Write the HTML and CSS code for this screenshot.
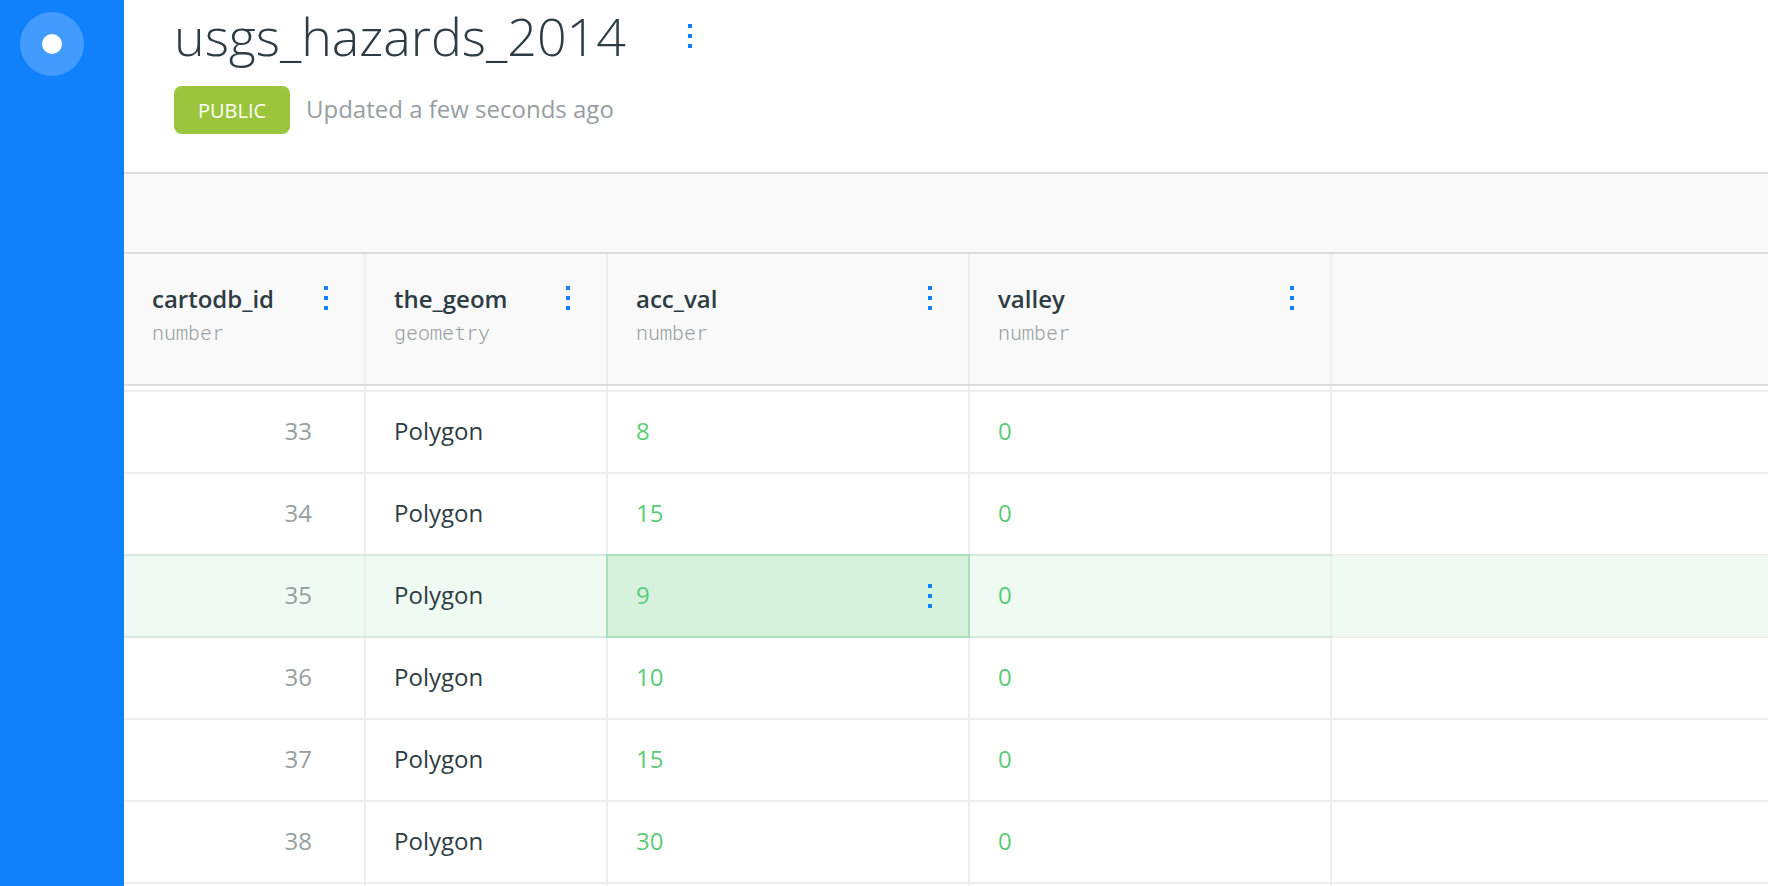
FILE: index.html
```html
<!DOCTYPE html>
<html lang="en">
<head>
<meta charset="utf-8">
<title>usgs_hazards_2014</title>
<link rel="stylesheet" href="styles.css">
</head>
<body>
<div class="app">
  <nav class="rail"><span class="logo"><span class="logo-dot"></span></span></nav>
  <main class="main">
    <header class="header">
      <div class="title-row">
        <h1 class="title">usgs_hazards_2014</h1>
        <svg class="dots" viewBox="0 0 4 24"><path d="M0 0h4v4H0zM0 10h4v4H0zM0 20h4v4H0z"/></svg>
      </div>
      <div class="meta">
        <span class="badge">PUBLIC</span>
        <span class="updated">Updated a few seconds ago</span>
      </div>
    </header>
    <div class="toolbar"></div>
    <div class="row head">
      <div class="th"><div><div class="name">cartodb_id</div><div class="type">number</div></div><svg class="dots" viewBox="0 0 4 24"><path d="M0 0h4v4H0zM0 10h4v4H0zM0 20h4v4H0z"/></svg></div>
      <div class="th"><div><div class="name">the_geom</div><div class="type">geometry</div></div><svg class="dots" viewBox="0 0 4 24"><path d="M0 0h4v4H0zM0 10h4v4H0zM0 20h4v4H0z"/></svg></div>
      <div class="th"><div><div class="name">acc_val</div><div class="type">number</div></div><svg class="dots" viewBox="0 0 4 24"><path d="M0 0h4v4H0zM0 10h4v4H0zM0 20h4v4H0z"/></svg></div>
      <div class="th"><div><div class="name">valley</div><div class="type">number</div></div><svg class="dots" viewBox="0 0 4 24"><path d="M0 0h4v4H0zM0 10h4v4H0zM0 20h4v4H0z"/></svg></div>
      <div class="th rest"></div>
    </div>
    <div class="row sliver"><div class="td"></div><div class="td"></div><div class="td"></div><div class="td"></div><div class="td rest"></div></div>
    <div class="row"><div class="td id">33</div><div class="td">Polygon</div><div class="td num">8</div><div class="td num">0</div><div class="td rest"></div></div>
    <div class="row above-active"><div class="td id">34</div><div class="td">Polygon</div><div class="td num">15</div><div class="td num">0</div><div class="td rest"></div></div>
    <div class="row active"><div class="td id">35</div><div class="td">Polygon</div><div class="td num selected">9<svg class="dots" viewBox="0 0 4 24"><path d="M0 0h4v4H0zM0 10h4v4H0zM0 20h4v4H0z"/></svg></div><div class="td num">0</div><div class="td rest"></div></div>
    <div class="row"><div class="td id">36</div><div class="td">Polygon</div><div class="td num">10</div><div class="td num">0</div><div class="td rest"></div></div>
    <div class="row"><div class="td id">37</div><div class="td">Polygon</div><div class="td num">15</div><div class="td num">0</div><div class="td rest"></div></div>
    <div class="row"><div class="td id">38</div><div class="td">Polygon</div><div class="td num">30</div><div class="td num">0</div><div class="td rest"></div></div>
    <div class="row"><div class="td"></div><div class="td"></div><div class="td"></div><div class="td"></div><div class="td rest"></div></div>
  </main>
</div>
</body>
</html>
```
FILE: styles.css
```css
* { box-sizing: border-box; }
body {
  margin: 0;
  background: #fff;
  color: #2e3c43;
  font: 24px/32px "Open Sans", sans-serif;
}
.app { display: flex; height: 886px; overflow: hidden; }
.rail {
  flex: none;
  width: 124px;
  padding: 12px 20px;
  background: #1181fb;
}
.logo {
  display: flex;
  align-items: center;
  justify-content: center;
  width: 64px;
  height: 64px;
  border-radius: 50%;
  background: #439bfd;
}
.logo-dot { width: 20px; height: 20px; border-radius: 50%; background: #fff; }
.main { flex: 1; min-width: 0; }
.dots { display: block; flex: none; width: 4px; height: 24px; fill: #1181fb; }

.header { height: 174px; padding-left: 50px; border-bottom: 2px solid #ddd; }
.title-row { display: flex; align-items: center; gap: 62px; height: 72px; }
.title { margin: 0; font-size: 52px; line-height: 72px; font-weight: 300; letter-spacing: -0.06px; }
.meta { display: flex; align-items: center; gap: 16px; margin-top: 14px; }
.badge {
  width: 116px;
  height: 48px;
  border-radius: 8px;
  background: #9bc63b;
  color: #fff;
  font-size: 20px;
  line-height: 49px;
  text-align: center;
}
.updated { padding-bottom: 2px; color: #979ea1; }
.toolbar { height: 80px; border-bottom: 2px solid #ddd; background: #f9f9f9; }

.row { display: grid; grid-template-columns: 242px 242px 362px 362px 1fr; height: 82px; }
.head { height: 132px; background: #f9f9f9; }
.th {
  display: flex;
  justify-content: space-between;
  padding: 29px 38px 0 28px;
  border-bottom: 2px solid #ddd;
  box-shadow: inset -2px 0 #eee;
}
.th .dots { margin-top: 3px; }
.name { font-weight: 600; line-height: 32px; }
.type {
  margin-top: 1px;
  color: #979ea1;
  font: 300 20px/32px "Roboto Mono", "DejaVu Sans Mono", monospace;
}
.td {
  display: flex;
  align-items: center;
  justify-content: space-between;
  padding: 0 38px 2px 28px;
  border-bottom: 2px solid #eee;
  box-shadow: inset -2px 0 #eee;
}
.td .dots { margin-top: 2px; }
.rest { box-shadow: none; }
.id { justify-content: flex-end; padding-right: 54px; color: #979ea1; }
.num { color: #5bcb79; }
.sliver { height: 6px; }
.active { background: #effaf2; }
.above-active .td:not(.rest),
.active .td:not(.rest) { border-bottom-color: #d5eadd; }
.selected { position: relative; background: #d6f2dd; }
.selected::before {
  content: "";
  position: absolute;
  inset: -2px 0 -2px -2px;
  border: 2px solid #a6e2b7;
}
```
